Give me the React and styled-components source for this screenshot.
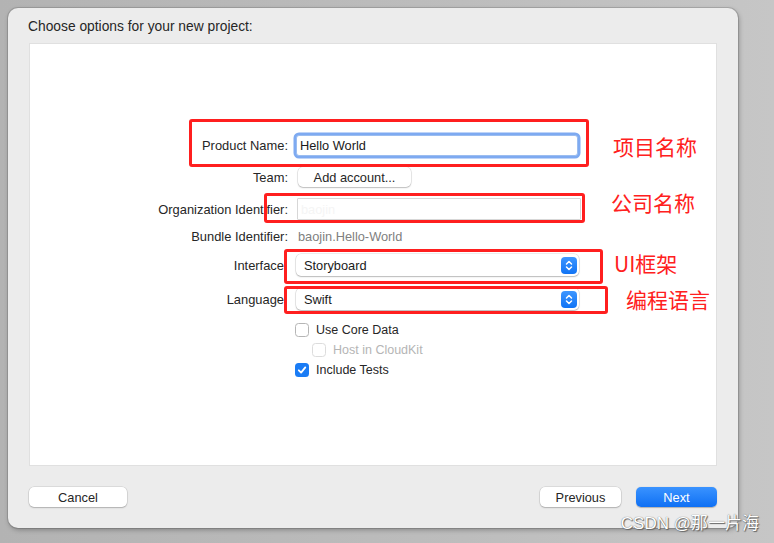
import React from "react";
import styled, { createGlobalStyle } from "styled-components";

const Global = createGlobalStyle`
  html, body { margin: 0; padding: 0; }
  body {
    width: 774px; height: 543px; overflow: hidden;
    font-family: "Liberation Sans", Arial, sans-serif;
    -webkit-font-smoothing: antialiased;
  }
`;

const Page = styled.div`
  position: relative;
  box-sizing: border-box;
  width: 774px;
  height: 543px;
  padding: 8px 36px 15px 8px;
  background: linear-gradient(90deg, #b3b3b3 0%, #bdbdbd 60%, #c6c6c6 100%);
`;

const Window = styled.div`
  box-sizing: border-box;
  height: 520px;
  width: 730px;
  background: #ececec;
  border-radius: 10px;
  box-shadow: 0 0 0 1px rgba(0,0,0,0.12), 1px 2px 5px rgba(0,0,0,0.28);
  padding: 9px 21px 0 20px;
  display: flex;
  flex-direction: column;
`;

const Title = styled.div`
  font-size: 13.8px;
  color: #262626;
  height: 26px;
  line-height: 19px;
`;

const Panel = styled.div`
  box-sizing: border-box;
  height: 423px;
  background: #ffffff;
  border: 1px solid #e0e0e0;
  margin-left: 1px;
  padding-top: 89px;
  display: flex;
  flex-direction: column;
`;

const Row = styled.div`
  display: grid;
  grid-template-columns: 258px 290px;
  column-gap: ${p => p.$gap ?? 8}px;
  align-items: center;
  height: ${p => p.$h}px;
  margin-top: ${p => p.$mt || 0}px;
`;

const Label = styled.div`
  text-align: right;
  font-size: 12.9px;
  color: #262626;
  padding-right: ${p => p.$pr || 0}px;
  white-space: nowrap;
`;

const Field = styled.div`
  box-sizing: border-box;
  width: ${p => p.$w || 284}px;
  height: ${p => p.$h || 22}px;
  background: #fff;
  border: 1px solid ${p => (p.$focus ? "#9bbdf0" : "#d7d7d7")};
  box-shadow: ${p => (p.$focus ? "0 0 0 2.5px #7eaaf1" : "none")};
  border-radius: ${p => (p.$focus ? 3 : 1)}px;
  margin-left: ${p => p.$ml || 0}px;
  padding-left: 3px;
  font-size: 12.8px;
  color: ${p => p.$faint ? "#f5f5f5" : "#1a1a1a"};
  display: flex;
  align-items: center;
`;

const PushButton = styled.button`
  box-sizing: border-box;
  height: ${p => p.$h || 20}px;
  width: ${p => p.$w}px;
  margin-left: ${p => p.$ml || 0}px;
  border: none;
  border-radius: 5px;
  background: ${p => (p.$primary ? "linear-gradient(#3a93ff, #0f70f4)" : "#ffffff")};
  color: ${p => (p.$primary ? "#ffffff" : "#262626")};
  box-shadow: ${p => (p.$primary
    ? "0 0.5px 1px rgba(0,0,0,0.25)"
    : "0 0 0 0.5px rgba(0,0,0,0.14), 0 1px 1.5px rgba(0,0,0,0.2)")};
  font-family: "Liberation Sans", Arial, sans-serif;
  font-size: 12.8px;
  padding: 0;
  display: flex;
  align-items: center;
  justify-content: center;
`;

const Value = styled.div`
  font-size: 12.8px;
  color: #808080;
  padding-left: 2px;
`;

const Popup = styled.div`
  box-sizing: border-box;
  width: 283px;
  height: 22px;
  background: #fff;
  border-radius: 5px;
  box-shadow: 0 0 0 0.5px rgba(0,0,0,0.14), 0 1px 1.5px rgba(0,0,0,0.22);
  display: flex;
  align-items: center;
  justify-content: space-between;
  padding: 0 2px 0 8px;
  font-size: 12.8px;
  color: #1a1a1a;
`;

const Stepper = styled.div`
  width: 16px;
  height: 17px;
  border-radius: 4px;
  background: linear-gradient(#3d96ff, #1174f5);
  display: flex;
  align-items: center;
  justify-content: center;
`;

const CheckRow = styled.div`
  display: flex;
  align-items: center;
  gap: 7px;
  margin-left: ${p => p.$ml || 0}px;
  font-size: 12.5px;
  color: ${p => (p.$disabled ? "#b5b5b5" : "#262626")};
`;

const Box = styled.div`
  box-sizing: border-box;
  width: 14px;
  height: 14px;
  border-radius: 3.5px;
  background: ${p => (p.$checked ? "#1a7cf5" : "#fff")};
  border: ${p => (p.$checked ? "none" : `1px solid ${p.$disabled ? "#dcdcdc" : "#b5b5b5"}`)};
  display: flex;
  align-items: center;
  justify-content: center;
`;

const Footer = styled.div`
  display: flex;
  align-items: center;
  padding-top: 21px;
  margin-left: 1px;
`;

const Spacer = styled.div`
  flex: 1;
`;

const RedBox = styled.div`
  position: absolute;
  box-sizing: border-box;
  border: 3px solid #ff1f1f;
  border-radius: 3px;
`;

const Note = styled.div`
  position: absolute;
  font-family: "Noto Sans CJK SC", "Liberation Sans", sans-serif;
  font-size: 21px;
  line-height: 24px;
  color: #ff2020;
  white-space: nowrap;
`;

const Watermark = styled.div`
  position: absolute;
  right: 15px;
  bottom: 9px;
  font-family: "Liberation Sans", "Noto Sans CJK SC", sans-serif;
  font-size: 17px;
  line-height: 20px;
  color: #ffffff;
  text-shadow: 0 0 1px #555, 1px 1px 1px #666;
  white-space: nowrap;
`;

const Check = () => (
  <svg width="10" height="10" viewBox="0 0 10 10">
    <path d="M1.8 5.3 L4.1 7.6 L8.3 2.4" fill="none" stroke="#fff" strokeWidth="1.8" strokeLinecap="round" strokeLinejoin="round" />
  </svg>
);

const Chevrons = () => (
  <svg width="10" height="13" viewBox="0 0 10 13">
    <path d="M2.5 5 L5 2.5 L7.5 5 M2.5 8 L5 10.5 L7.5 8" fill="none" stroke="#fff" strokeWidth="1.5" strokeLinecap="round" strokeLinejoin="round" />
  </svg>
);

export default function App() {
  return (
    <>
      <Global />
      <Page>
        <Window>
          <Title>Choose options for your new project:</Title>
          <Panel>
            <Row $h={24} $mt={0}>
              <Label>Product Name:</Label>
              <Field $focus $h={21} $w={282}>Hello World</Field>
            </Row>
            <Row $h={20} $mt={10}>
              <Label>Team:</Label>
              <PushButton $w={113} $ml={2}>Add account...</PushButton>
            </Row>
            <Row $h={22} $mt={11}>
              <Label>Organization Identifier:</Label>
              <Field $faint $ml={1}>baojin</Field>
            </Row>
            <Row $h={16} $mt={8}>
              <Label>Bundle Identifier:</Label>
              <Value>baojin.Hello-World</Value>
            </Row>
            <Row $h={22} $mt={10}>
              <Label $pr={4}>Interface</Label>
              <Popup>Storyboard<Stepper><Chevrons /></Stepper></Popup>
            </Row>
            <Row $h={22} $mt={12}>
              <Label $pr={4}>Language</Label>
              <Popup>Swift<Stepper><Chevrons /></Stepper></Popup>
            </Row>
            <Row $h={14} $mt={13} $gap={7}>
              <span />
              <CheckRow><Box />Use Core Data</CheckRow>
            </Row>
            <Row $h={14} $mt={6} $gap={7}>
              <span />
              <CheckRow $ml={17} $disabled><Box $disabled />Host in CloudKit</CheckRow>
            </Row>
            <Row $h={14} $mt={6} $gap={7}>
              <span />
              <CheckRow><Box $checked><Check /></Box>Include Tests</CheckRow>
            </Row>
          </Panel>
          <Footer>
            <PushButton $w={98}>Cancel</PushButton>
            <Spacer />
            <PushButton $w={81}>Previous</PushButton>
            <PushButton $w={81} $ml={15} $primary>Next</PushButton>
          </Footer>
        </Window>

        <RedBox style={{ left: 189, top: 119, width: 400, height: 48 }} />
        <RedBox style={{ left: 264, top: 193, width: 321, height: 30 }} />
        <RedBox style={{ left: 284, top: 249, width: 319, height: 35 }} />
        <RedBox style={{ left: 284, top: 286, width: 324, height: 28 }} />
        <Note style={{ left: 613, top: 134 }}>项目名称</Note>
        <Note style={{ left: 611, top: 190 }}>公司名称</Note>
        <Note style={{ left: 614, top: 251 }}>UI框架</Note>
        <Note style={{ left: 626, top: 287 }}>编程语言</Note>
        <Watermark>CSDN @那一片海</Watermark>
      </Page>
    </>
  );
}
